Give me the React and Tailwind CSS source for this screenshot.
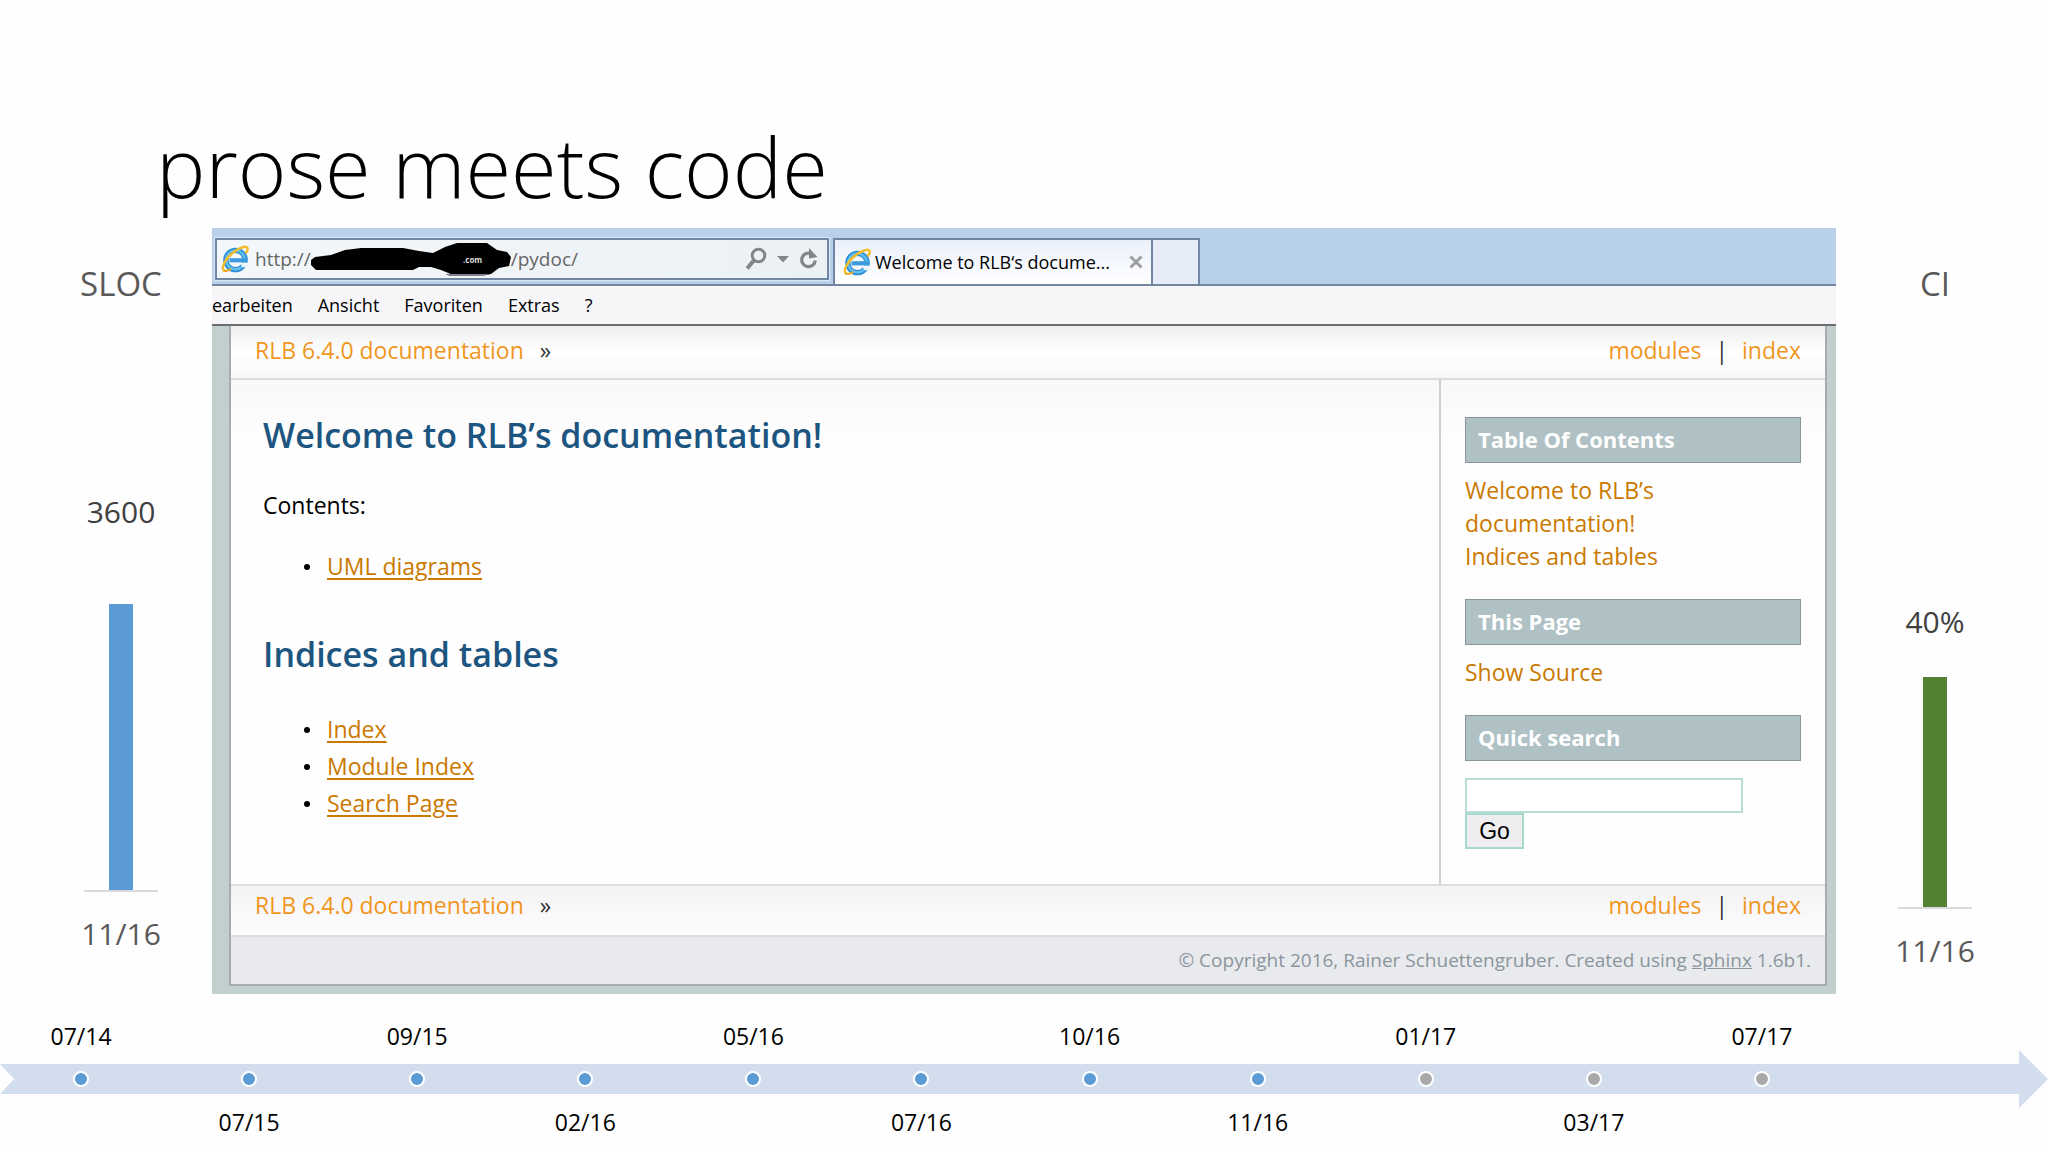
const timeline = [
  { date: '07/14', done: true },
  { date: '07/15', done: true },
  { date: '09/15', done: true },
  { date: '02/16', done: true },
  { date: '05/16', done: true },
  { date: '07/16', done: true },
  { date: '10/16', done: true },
  { date: '11/16', done: true },
  { date: '01/17', done: false },
  { date: '03/17', done: false },
  { date: '07/17', done: false },
];

function BrowserLogo() {
  return (
    <svg viewBox="0 0 28 28" className="size-7 shrink-0" aria-hidden="true">
      <circle cx="14.5" cy="15" r="9.6" fill="none" stroke="#2f8fd6" strokeWidth="5.4" />
      <circle cx="14.5" cy="15" r="9.4" fill="none" stroke="#62bdf0" strokeWidth="2.4" />
      <path d="M19 17.6h9.5v4.6h-7z" fill="#eef3f8" />
      <path d="M8.5 13.2h17.8v4.2H8.5z" fill="#3c9ade" />
      <path d="M3.2 25.6C-.6 23 4.4 13.5 12.5 7.2 19 2.2 26 .3 26.6 3.2c.3 1.3-.4 3-1.4 4.4" fill="none" stroke="#f3bd2c" strokeWidth="2.5" strokeLinecap="round" />
      <path d="M3.2 25.6c1.6.8 4 .1 6.2-1.2" fill="none" stroke="#e9a81d" strokeWidth="2" strokeLinecap="round" />
    </svg>
  );
}

function Scribble() {
  return (
    <svg viewBox="0 0 200 34" className="h-[34px] w-[200px] shrink-0" aria-hidden="true">
      <path
        d="M4 15 20 13 34 8 50 6 92 6 108 9 122 11 134 5 146 1 176 1 186 8 196 10 200 15 198 24 188 26 180 32 170 34 142 33 130 28 120 25 108 25 102 28 5 28 0 23 0 18Z"
        fill="#000"
      />
      <path d="M134 32h44l-6 2h-34z" fill="#85808f" />
      <text x="152" y="21" fill="#ddd" fontSize="8" fontWeight="700" fontFamily="Open Sans, sans-serif">.com</text>
    </svg>
  );
}

function AddressBar() {
  return (
    <div className="flex h-[42px] w-[614px] items-center border-2 border-[#7186a4] bg-gradient-to-r from-[#f3f7fa] to-[#ecf1f5] pl-1 text-[19px] text-[#666] outline outline-1 outline-[#dce8f5]">
      <BrowserLogo />
      <span className="ml-[6px] leading-8">http://</span>
      <Scribble />
      <span className="leading-8">/pydoc/</span>
      <div className="mr-2 ml-auto flex items-center gap-[10px] text-[#858585]">
        <button aria-label="Search">
          <svg viewBox="0 0 22 24" className="h-6 w-[22px]" fill="none" stroke="currentColor">
            <circle cx="13.5" cy="8.5" r="6.3" strokeWidth="3" />
            <path d="M8.8 13.5 2.2 21.5" strokeWidth="4" />
          </svg>
        </button>
        <button aria-label="Address history">
          <svg viewBox="0 0 12 8" className="h-2 w-3" fill="currentColor">
            <path d="M0 1h12L6 7.5z" />
          </svg>
        </button>
        <button aria-label="Reload">
          <svg viewBox="0 0 20 24" className="h-6 w-5" fill="none" stroke="currentColor">
            <path d="M11 6.2A6.8 6.8 0 1 0 16.3 13.5" strokeWidth="3.2" />
            <path d="M10 1v10.5L18.5 10z" fill="currentColor" stroke="none" />
          </svg>
        </button>
      </div>
    </div>
  );
}

function BrowserChrome() {
  return (
    <>
      <div className="flex h-[58px] items-start gap-1 border-b-2 border-[#74869d] bg-[#b9d0eb] pt-[10px] pl-[3px]">
        <AddressBar />
        <div className="flex h-[46px]">
          <div className="flex w-[320px] items-center border-2 border-b-0 border-[#7186a4] bg-gradient-to-b from-[#eaf0fa] to-white pl-2 text-[18px] text-black">
            <BrowserLogo />
            <span className="ml-1 leading-8 whitespace-nowrap">Welcome to RLB‘s docume...</span>
            <button aria-label="Close tab" className="mr-2 ml-auto text-[#a0a0a0]">
              <svg viewBox="0 0 14 14" className="size-[14px]" stroke="currentColor" strokeWidth="3">
                <path d="M1.5 1.5l11 11M12.5 1.5l-11 11" />
              </svg>
            </button>
          </div>
          <button aria-label="New tab" className="w-[47px] border-t-2 border-r-2 border-[#7186a4] bg-[#e6ebf8]" />
        </div>
      </div>
      <nav className="flex h-10 items-center gap-[25px] border-b-2 border-[#6c6c6e] bg-[#f6f6f8] text-[18px] leading-8 text-black">
        <button>earbeiten</button>
        <button>Ansicht</button>
        <button>Favoriten</button>
        <button>Extras</button>
        <button>?</button>
      </nav>
    </>
  );
}

function RelatedBar({ className }) {
  return (
    <div className={`flex justify-between px-6 text-[23px] leading-8 text-[#f0961e] ${className}`}>
      <div className="flex gap-4">
        <a href="#home">RLB 6.4.0 documentation</a>
        <span className="text-[#333]">»</span>
      </div>
      <div className="flex gap-[14px]">
        <a href="#modules">modules</a>
        <span className="text-[#333]">|</span>
        <a href="#index">index</a>
      </div>
    </div>
  );
}

function SideHeading({ children }) {
  return (
    <h3 className="flex h-[46px] items-center border border-[#87979a] bg-[#afc1c4] pb-[2px] pl-3 text-[22px] leading-8 font-bold text-white">
      {children}
    </h3>
  );
}

function DocLinks({ items, className }) {
  return (
    <ul className={`pl-[41px] text-[23px] leading-[37px] text-[#ca7900] ${className}`}>
      {items.map((item) => (
        <li key={item} className="flex items-center gap-[17px] before:size-[6px] before:rounded-full before:bg-black">
          <a href={`#${item}`} className="underline decoration-2 underline-offset-3">{item}</a>
        </li>
      ))}
    </ul>
  );
}

function DocPage() {
  return (
    <div className="bg-[#c1d0cf] pr-[9px] pb-2 pl-[17px]">
      <div className="border-2 border-t-0 border-[#a9abb1] bg-white">
        <RelatedBar className="border-b-2 border-[#dddde0] bg-gradient-to-b from-[#eeeeef] via-white to-[#f8f6f9] pt-2 pb-3" />
        <div className="flex bg-[linear-gradient(#f8f7fa,#fefefe_60px)]">
          <main className="flex-1 pt-[31px] pl-8 text-black">
            <h2 className="text-[34px] leading-[48px] font-semibold text-[#1c5580]">Welcome to RLB’s documentation!</h2>
            <p className="mt-[30px] text-[23px] leading-8">Contents:</p>
            <DocLinks items={['UML diagrams']} className="mt-[27px]" />
            <h2 className="mt-[45px] text-[34px] leading-[48px] font-semibold text-[#1c5580]">Indices and tables</h2>
            <DocLinks items={['Index', 'Module Index', 'Search Page']} className="mt-[33px]" />
          </main>
          <aside className="w-[386px] border-l-2 border-[#cfcfd2] px-6 pt-[37px] pb-[35px] text-[23px] leading-[33px] text-[#ca7900]">
            <SideHeading>Table Of Contents</SideHeading>
            <ul className="mt-[11px] mb-[26px]">
              <li className="w-[240px]"><a href="#welcome">Welcome to RLB’s documentation!</a></li>
              <li><a href="#indices">Indices and tables</a></li>
            </ul>
            <SideHeading>This Page</SideHeading>
            <ul className="mt-[11px] mb-[26px]">
              <li><a href="#source">Show Source</a></li>
            </ul>
            <SideHeading>Quick search</SideHeading>
            <form className="mt-[17px] flex flex-col items-start">
              <input aria-label="Quick search" className="h-[35px] w-[278px] border-2 border-[#b9dcd4] bg-white px-2 text-black" />
              <button type="button" className="h-9 w-[59px] border-2 border-[#a6d8cb] bg-[#eeedef] font-['Liberation_Sans',sans-serif] leading-8 text-black">Go</button>
            </form>
          </aside>
        </div>
        <RelatedBar className="border-y-2 border-[#dddde0] bg-gradient-to-b from-[#f3f2f4] to-[#fdfcfe] pt-[3px] pb-[14px]" />
        <footer className="bg-[#e8eaee] pt-[7px] pr-[14px] pb-2 text-right text-[19px] leading-8 text-[#8b959c]">
          © Copyright 2016, Rainer Schuettengruber. Created using <a href="#sphinx" className="underline">Sphinx</a> 1.6b1.
        </footer>
      </div>
    </div>
  );
}

function BarChart({ title, value, date, height, gap, bar, offset }) {
  return (
    <section className="flex flex-col items-center pt-9 text-[30px] leading-10 text-[#595959]">
      <h2 className="text-[33px]">{title}</h2>
      <div className="flex w-[74px] flex-col items-center border-b-2 border-[#d9d9d9] text-[#404040]" style={{ marginTop: offset }}>
        <span>{value}</span>
        <div className={`w-6 ${bar}`} style={{ height, marginTop: gap }} />
      </div>
      <span className="mt-[22px]">{date}</span>
    </section>
  );
}

function Timeline() {
  return (
    <div className="grid items-center">
      {/* band with a notched tail and an arrow head */}
      <div className="col-start-1 row-start-1 flex items-center">
        <div className="h-[30px] flex-1 bg-[#d2deee] [clip-path:polygon(0_0,100%_0,100%_100%,0_100%,14px_50%)]" />
        <div className="h-[58px] w-[29px] bg-[#d2deee] [clip-path:polygon(0_0,100%_50%,0_100%)]" />
      </div>
      <ol className="z-10 col-start-1 row-start-1 mr-[202px] -ml-[3px] grid grid-cols-11 text-[23px] leading-8 text-black">
        {timeline.map(({ date, done }, i) => (
          <li key={date} className="grid grid-rows-[32px_54px_32px] place-items-center">
            <span className={i % 2 ? 'row-start-3' : 'row-start-1'}>{date}</span>
            <span className={`row-start-2 size-4 rounded-full border-2 border-white ${done ? 'bg-[#5b9bd5]' : 'bg-[#a9a9ab]'}`} />
          </li>
        ))}
      </ol>
    </div>
  );
}

export default function App() {
  return (
    <div className="min-h-screen overflow-hidden bg-[#fefefe] font-['Open_Sans',sans-serif]">
      <h1 className="pt-[110px] pb-[6px] pl-[156px] text-[83px] leading-[112px] font-light text-black">prose meets code</h1>
      <div className="grid grid-cols-[212px_1fr_212px]">
        <div className="pl-[30px]">
          <BarChart title="SLOC" value="3600" date="11/16" height={286} gap={72} bar="bg-[#5b9bd5]" offset={188} />
        </div>
        <div>
          <BrowserChrome />
          <DocPage />
        </div>
        <div className="pr-[14px]">
          <BarChart title="CI" value="40%" date="11/16" height={230} gap={35} bar="bg-[#548235]" offset={298} />
        </div>
      </div>
      <div className="mt-[26px]">
        <Timeline />
      </div>
    </div>
  );
}
